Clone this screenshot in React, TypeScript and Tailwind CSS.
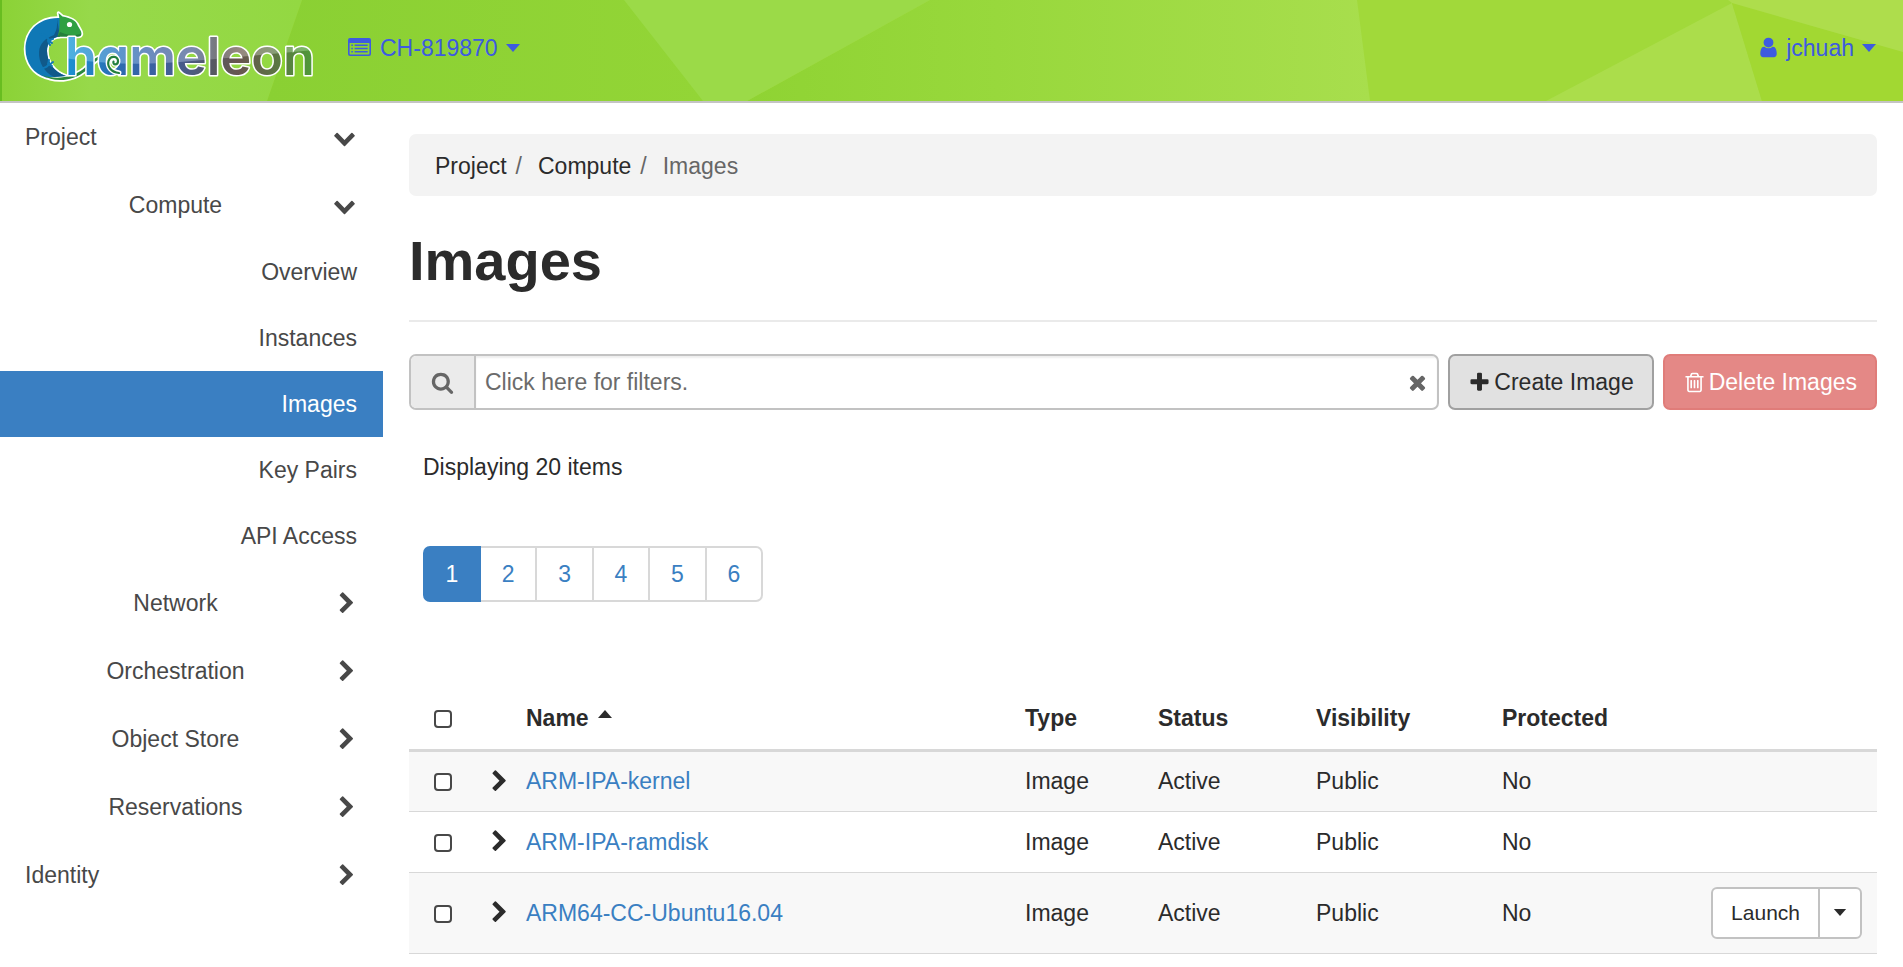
import React from "react";

type IconProps = { className?: string };

function Glyph({ d, viewBox = "0 0 1792 1792", className = "" }: IconProps & { d: string; viewBox?: string }) {
  return (
    <svg aria-hidden="true" viewBox={viewBox} className={`size-[23px] shrink-0 fill-current ${className}`}>
      <path d={d} />
    </svg>
  );
}

const paths = {
  down: "M1683 808l-742 741q-19 19-45 19t-45-19l-742-741q-19-19-19-45.500t19-45.500l166-165q19-19 45-19t45 19l531 531 531-531q19-19 45-19t45 19l166 165q19 19 19 45.500t-19 45.500z",
  right:
    "M1363 877l-742 742q-19 19-45 19t-45-19l-166-166q-19-19-19-45t19-45l531-531-531-531q-19-19-19-45t19-45l166-166q19-19 45-19t45 19l742 742q19 19 19 45t-19 45z",
  times:
    "M1490 1322q0 40-28 68l-136 136q-28 28-68 28t-68-28l-294-294-294 294q-28 28-68 28t-68-28l-136-136q-28-28-28-68t28-68l294-294-294-294q-28-28-28-68t28-68l136-136q28-28 68-28t68 28l294 294 294-294q28-28 68-28t68 28l136 136q28 28 28 68t-28 68l-294 294 294 294q28 28 28 68z",
  plus: "M1600 736v192q0 40-28 68t-68 28h-416v416q0 40-28 68t-68 28h-192q-40 0-68-28t-28-68v-416h-416q-40 0-68-28t-28-68v-192q0-40 28-68t68-28h416v-416q0-40 28-68t68-28h192q40 0 68 28t28 68v416h416q40 0 68 28t28 68z",
  search:
    "M1216 832q0-185-131.500-316.500t-316.500-131.500-316.500 131.500-131.500 316.500 131.500 316.500 316.500 131.500 316.500-131.500 131.500-316.500zm512 832q0 52-38 90t-90 38q-54 0-90-38l-343-342q-179 124-399 124-143 0-273.500-55.500t-225-150-150-225-55.500-273.500 55.500-273.500 150-225 225-150 273.500-55.500 273.500 55.500 225 150 150 225 55.500 273.500q0 220-124 399l343 343q37 37 37 90z",
  user: "M1536 1399q0 109-62.500 187t-150.500 78h-854q-88 0-150.500-78t-62.500-187q0-85 8.500-160.500t31.500-152 58.500-131 94-89 134.500-34.500q131 128 313 128t313-128q76 0 134.500 34.500t94 89 58.500 131 31.500 152 8.500 160.500zm-256-887q0 159-112.500 271.500t-271.500 112.500-271.500-112.500-112.500-271.500 112.500-271.500 271.500-112.500 271.500 112.500 112.500 271.500z",
  trash:
    "M704 736v576q0 14-9 23t-23 9h-64q-14 0-23-9t-9-23v-576q0-14 9-23t23-9h64q14 0 23 9t9 23zm256 0v576q0 14-9 23t-23 9h-64q-14 0-23-9t-9-23v-576q0-14 9-23t23-9h64q14 0 23 9t9 23zm256 0v576q0 14-9 23t-23 9h-64q-14 0-23-9t-9-23v-576q0-14 9-23t23-9h64q14 0 23 9t9 23zm128 724v-948h-896v948q0 22 7 40.500t14.500 27 10.500 8.500h832q3 0 10.500-8.500t14.500-27 7-40.500zm-672-1076h448l-48-117q-7-9-17-11h-317q-10 2-17 11zm928 32v64q0 14-9 23t-23 9h-96v948q0 83-47 143.500t-113 60.500h-832q-66 0-113-58.500t-47-141.500v-952h-96q-14 0-23-9t-9-23v-64q0-14 9-23t23-9h309l70-167q15-37 54-63t79-26h320q40 0 79 26t54 63l70 167h309q14 0 23 9t9 23z",
};

function Caret({ up = false, className = "" }: { up?: boolean; className?: string }) {
  return (
    <svg aria-hidden="true" viewBox="0 0 14 8" className={`h-2 w-3.5 shrink-0 fill-current ${className}`}>
      <path d={up ? "M0 8L7 0L14 8Z" : "M0 0H14L7 8Z"} />
    </svg>
  );
}

function ListAltIcon() {
  return (
    <svg aria-hidden="true" viewBox="0 0 23 22" className="h-[22px] w-[23px] shrink-0 fill-current">
      <path
        fillRule="evenodd"
        d="M2 1H21Q23 1 23 3V17Q23 19 21 19H2Q0 19 0 17V3Q0 1 2 1ZM1.600 6V16.700Q1.600 17.500 2.400 17.500H20.600Q21.400 17.500 21.400 16.700V6Z"
      />
      <path d="M3.300 7.500H4.900V9H3.300ZM3.300 10.800H4.900V12.300H3.300ZM3.300 14H4.900V15.500H3.300ZM6.600 7.500H19.700V9H6.600ZM6.600 10.800H19.700V12.300H6.600ZM6.600 14H19.700V15.500H6.600Z" />
    </svg>
  );
}

const bodyPath =
  "M60 18C38 17 25.500 32 25.500 49C25.500 63 34 74 46 77.500L66 76C54 72 47 62 47 51C47 43 52 37.500 60 36.500Z";
const headPath = "M58.500 13L62.500 16.500C70 18 75 20 77 24C79 29 81.500 30 81.500 34Q81 36.500 78 36.500H57.500C60 30 59.500 24 59.500 19Z";
const tailPath = "M42 75C56 80 72 78 84 68.500C90 63 94 58 99 56.500L100 58.500C94 62 90 67 85.500 71C73 81.500 54 83 42 75Z";
const curlPath = "M119 73C111 72 107 66.500 108.500 61C110.500 55 118.500 56 118 61.500C117.500 65.500 112.500 65 113.500 61.500";

function Logo() {
  return (
    <svg role="img" aria-label="Chameleon" viewBox="0 0 340 101" className="h-[101px] w-[340px] shrink-0">
      <defs>
        <linearGradient id="wordTop" x1="0" x2="1">
          <stop offset="0" stopColor="#4bb3e2" />
          <stop offset="0.2" stopColor="#5a98cf" />
          <stop offset="0.38" stopColor="#7089ba" />
          <stop offset="0.52" stopColor="#7a8aac" />
          <stop offset="0.61" stopColor="#77787c" />
          <stop offset="0.7" stopColor="#968780" />
          <stop offset="0.83" stopColor="#8a9c78" />
          <stop offset="1" stopColor="#76bd62" />
        </linearGradient>
        <linearGradient id="wordBottom" x1="0" x2="1">
          <stop offset="0" stopColor="#1b94d4" />
          <stop offset="0.2" stopColor="#2a6db3" />
          <stop offset="0.38" stopColor="#3d5f9f" />
          <stop offset="0.52" stopColor="#4e5a7e" />
          <stop offset="0.61" stopColor="#58585e" />
          <stop offset="0.7" stopColor="#685550" />
          <stop offset="0.83" stopColor="#5d7044" />
          <stop offset="1" stopColor="#4f9c38" />
        </linearGradient>
        <pattern id="word" patternUnits="userSpaceOnUse" width="340" height="101">
          <rect x="64" width="250" height="101" fill="url(#wordTop)" />
          <path d="M64 58Q120 67 180 62T314 50V101H64Z" fill="url(#wordBottom)" />
        </pattern>
      </defs>
      <g fill="#fff" stroke="#fff" strokeWidth="3.500" strokeLinejoin="round">
        <path d={bodyPath} />
        <path d={headPath} />
        <path d={tailPath} />
      </g>
      <path d={bodyPath} fill="#0f78b6" />
      <path
        d="M57 19L60 36.500C51 37.500 47 43 47 51C47 62 54 72 66 76L54 77C44 72 38.500 62 39 52C39.500 43 46 38 54 35Q58 28 57 19Z"
        fill="#10598a"
      />
      <path
        d="M40 34Q46 34 49 40L53 39M48 40L52 43M48 41L50 45M39 68Q46 69 49 64L52 66M49 65L53 62M48 64L49 60"
        fill="none"
        stroke="#0f78b6"
        strokeWidth="2"
        strokeLinecap="round"
      />
      <path d={headPath} fill="#2fa043" />
      <path d="M60 32Q70 37 81 34Q81 36.500 78 36.500H57.500Z" fill="#257f3b" />
      <circle cx="69.500" cy="24.500" r="2.600" fill="#fff" />
      <path d={tailPath} fill="#2b8a3e" />
      <text
        x="65"
        y="74.500"
        fontSize="52"
        className="font-['Inter',sans-serif] font-semibold [font-feature-settings:'cv11','ss03']"
        fill="url(#word)"
        stroke="#fff"
        strokeWidth="3"
        strokeLinejoin="round"
        paintOrder="stroke"
      >
        hameleon
      </text>
      <path d={curlPath} fill="none" stroke="#fff" strokeWidth="5" strokeLinecap="round" />
      <path d={curlPath} fill="none" stroke="#237f3d" strokeWidth="2.200" strokeLinecap="round" />
    </svg>
  );
}

function HeaderBackdrop() {
  return (
    <svg
      aria-hidden="true"
      viewBox="0 0 1903 101"
      preserveAspectRatio="none"
      className="absolute inset-0 -z-10 h-full w-full"
    >
      <defs>
        <linearGradient id="facetA" x1="0" x2="1">
          <stop offset="0" stopColor="#8bd236" />
          <stop offset="0.300" stopColor="#97d94a" />
          <stop offset="1" stopColor="#93d842" />
        </linearGradient>
        <linearGradient id="facetB" x1="0" x2="1">
          <stop offset="0" stopColor="#8ad033" />
          <stop offset="1" stopColor="#93d536" />
        </linearGradient>
        <linearGradient id="facetC" x1="0" x2="1">
          <stop offset="0" stopColor="#8fd333" />
          <stop offset="0.400" stopColor="#98d83c" />
          <stop offset="1" stopColor="#a8de4d" />
        </linearGradient>
      </defs>
      <rect width="1903" height="101" fill="#a1d93a" />
      <path d="M0 0H302L267 101H0Z" fill="url(#facetA)" />
      <path d="M0 0H2V101H0Z" fill="#68bd20" />
      <path d="M302 0H625L704 101H267Z" fill="url(#facetB)" />
      <path d="M930 0H1357L1370 101H747Z" fill="url(#facetC)" />
      <path d="M624 0H930L747 101H703Z" fill="#9bda48" />
      <path d="M1732 3L1762 101H1546Z" fill="#abdd4b" />
      <path d="M1732 3L1903 52V101H1762Z" fill="#a2d832" />
      <path d="M1728 0H1903V52L1732 3Z" fill="#aedd4c" />
    </svg>
  );
}

type NavEntry = { label: string; level: 1 | 2 | 3; open?: boolean; active?: boolean };

const nav: NavEntry[] = [
  { label: "Project", level: 1, open: true },
  { label: "Compute", level: 2, open: true },
  { label: "Overview", level: 3 },
  { label: "Instances", level: 3 },
  { label: "Images", level: 3, active: true },
  { label: "Key Pairs", level: 3 },
  { label: "API Access", level: 3 },
  { label: "Network", level: 2 },
  { label: "Orchestration", level: 2 },
  { label: "Object Store", level: 2 },
  { label: "Reservations", level: 2 },
  { label: "Identity", level: 1 },
];

function NavItem({ label, level, open, active }: NavEntry) {
  if (level === 3) {
    return (
      <a
        href="#"
        aria-current={active ? "page" : undefined}
        className={`flex h-[66px] items-center justify-end pr-[26px] ${active ? "bg-[#3a7fc2] text-white" : ""}`}
      >
        {label}
      </a>
    );
  }
  return (
    <button type="button" aria-expanded={!!open} className="flex h-[68px] w-full items-center pr-[27px]">
      <span className={level === 1 ? "flex-1 pl-[25px] text-left" : "flex-1 pl-[18px] text-center"}>{label}</span>
      {open ? <Glyph d={paths.down} /> : <Glyph d={paths.right} viewBox="-176 0 1792 1792" />}
    </button>
  );
}

const images = [
  { name: "ARM-IPA-kernel", launch: false },
  { name: "ARM-IPA-ramdisk", launch: false },
  { name: "ARM64-CC-Ubuntu16.04", launch: true },
];

function Checkbox({ label }: { label: string }) {
  return (
    <input
      type="checkbox"
      aria-label={label}
      className="mt-0.5 block size-[18px] appearance-none rounded-[4px] border-2 border-[#484848] bg-white checked:bg-[#3a7fc2]"
    />
  );
}

export default function App() {
  return (
    <div className="min-h-screen bg-white font-['Liberation_Sans',Arial,sans-serif] text-[23px] leading-8 text-[#2b2b2b]">
      <header className="relative isolate flex items-center border-b-2 border-[#c4c4c4] text-[#3d5be0]">
        <HeaderBackdrop />
        <a href="#">
          <Logo />
        </a>
        <button type="button" className="ml-2 flex items-center pb-1.5">
          <ListAltIcon />
          <span className="ml-[9px]">CH-819870</span>
          <Caret className="ml-2" />
        </button>
        <button type="button" className="mr-[27px] ml-auto flex items-center pb-1.5">
          <Glyph d={paths.user} />
          <span className="ml-1.5">jchuah</span>
          <Caret className="ml-2" />
        </button>
      </header>

      <div className="flex">
        <nav aria-label="Dashboard" className="w-[383px] shrink-0 text-[#484848]">
          {nav.map((item) => (
            <NavItem key={item.label} {...item} />
          ))}
        </nav>

        <main className="min-w-0 flex-1 px-[26px] pt-[31px]">
          <ol className="flex items-center rounded-[7px] bg-[#f3f3f3] px-[26px] pt-4 pb-3.5">
            <li>
              <a href="#">Project</a>
            </li>
            <li className="flex">
              <span className="mr-4 ml-[9px] text-[#666]">/</span>
              <a href="#">Compute</a>
            </li>
            <li className="flex text-[#666]">
              <span className="mr-4 ml-[9px]">/</span>
              Images
            </li>
          </ol>

          <h1 className="border-b-2 border-[#eaeaea] pt-8 pb-[26px] text-[56px] leading-[66px] font-bold">Images</h1>

          <div className="mt-8 flex gap-[9px]">
            <div className="flex h-14 min-w-0 flex-1 items-center overflow-hidden rounded-[7px] border-2 border-[#c2c2c2]">
              <label
                htmlFor="filters"
                className="flex h-full w-[65px] shrink-0 items-center justify-center border-r-2 border-[#c2c2c2] bg-[#ebebeb] text-[#666]"
              >
                <Glyph d={paths.search} />
              </label>
              <div className="flex h-full min-w-0 flex-1 items-center shadow-[inset_0_2px_2px_rgba(0,0,0,0.07)]">
                <input
                  id="filters"
                  type="text"
                  aria-label="Filters"
                  placeholder="Click here for filters."
                  className="h-full min-w-0 flex-1 bg-transparent pl-[9px] outline-none placeholder:text-[#6b6b6b]"
                />
                <button type="button" aria-label="Clear filters" className="mr-2 ml-2 text-[#666]">
                  <Glyph d={paths.times} />
                </button>
              </div>
            </div>
            <button
              type="button"
              className="flex h-14 items-center rounded-[7px] border-2 border-[#a0a0a0] bg-[#e1e1e1] px-[18px]"
            >
              <Glyph d={paths.plus} />
              <span className="ml-[3px]">Create Image</span>
            </button>
            <button
              type="button"
              className="flex h-14 items-center rounded-[7px] border-2 border-[#e07c79] bg-[#e48886] px-[18px] text-white"
            >
              <Glyph d={paths.trash} />
              <span className="ml-[3px]">Delete Images</span>
            </button>
          </div>

          <p className="mt-[41px] pl-3.5">Displaying 20 items</p>

          <nav aria-label="Pages" className="mt-[63px] ml-3.5 flex h-14 w-[340px] text-[#3a7fc2]">
            <a
              href="#"
              aria-current="page"
              className="flex w-[58px] items-center justify-center rounded-l-[7px] bg-[#3a7fc2] text-white"
            >
              1
            </a>
            {[2, 3, 4, 5, 6].map((page) => (
              <a
                key={page}
                href="#"
                className="flex flex-1 items-center justify-center border-y-2 border-r-2 border-[#d8d8d8] last:rounded-r-[7px]"
              >
                {page}
              </a>
            ))}
          </nav>

          <table className="mt-[85px] w-full table-fixed border-collapse text-left">
            <colgroup>
              <col className="w-[70px]" />
              <col className="w-[34px]" />
              <col />
              <col className="w-[133px]" />
              <col className="w-[158px]" />
              <col className="w-[186px]" />
              <col className="w-[160px]" />
              <col className="w-[228px]" />
            </colgroup>
            <thead>
              <tr className="h-[63px] border-b-3 border-[#d8d8d8]">
                <th className="pl-[25px]">
                  <Checkbox label="Select all images" />
                </th>
                <td />
                <th className="px-[13px]">
                  <span className="inline-flex items-center gap-[9px]">
                    Name <Caret up className="mb-2" />
                  </span>
                </th>
                <th className="px-[13px]">Type</th>
                <th className="px-[13px]">Status</th>
                <th className="px-[13px]">Visibility</th>
                <th className="px-[13px]">Protected</th>
                <td />
              </tr>
            </thead>
            <tbody>
              {images.map((image) => (
                <tr
                  key={image.name}
                  className={`border-b border-[#d8d8d8] odd:bg-[#f8f8f8] ${image.launch ? "h-[81px]" : "h-[61px]"}`}
                >
                  <td className="pl-[25px]">
                    <Checkbox label={`Select ${image.name}`} />
                  </td>
                  <td>
                    <button type="button" aria-label={`Show details of ${image.name}`} className="-mr-4 ml-[9px] block">
                      <Glyph d={paths.right} />
                    </button>
                  </td>
                  <td className="px-[13px]">
                    <a href="#" className="text-[#3a7fc2]">
                      {image.name}
                    </a>
                  </td>
                  <td className="px-[13px]">Image</td>
                  <td className="px-[13px]">Active</td>
                  <td className="px-[13px]">Public</td>
                  <td className="px-[13px]">No</td>
                  <td className="pr-[15px]">
                    {image.launch && (
                      <div className="ml-auto flex h-[52px] w-fit rounded-[6px] border-2 border-[#c2c2c2] bg-white text-[21px]">
                        <button type="button" className="px-[18px]">
                          Launch
                        </button>
                        <button
                          type="button"
                          aria-label="More actions"
                          className="flex w-[42px] items-center justify-center border-l-2 border-[#c2c2c2]"
                        >
                          <Caret className="h-[7px] w-3" />
                        </button>
                      </div>
                    )}
                  </td>
                </tr>
              ))}
            </tbody>
          </table>
        </main>
      </div>
    </div>
  );
}
